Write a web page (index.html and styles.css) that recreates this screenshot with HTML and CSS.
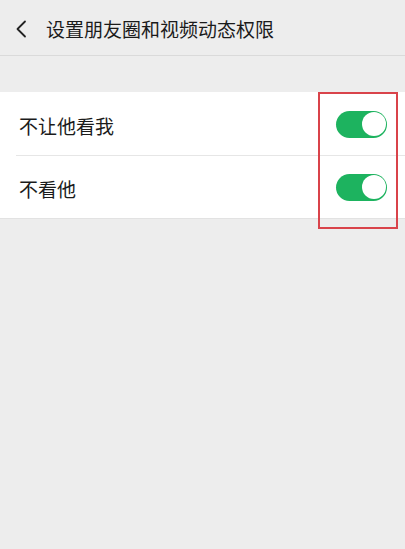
FILE: index.html
```html
<!DOCTYPE html>
<html lang="zh-CN">
<head>
<meta charset="utf-8">
<title>设置朋友圈和视频动态权限</title>
<link rel="stylesheet" href="styles.css">
</head>
<body>
<div class="page">
  <header class="nav">
    <svg class="back" width="12" height="18" viewBox="0 0 12 18" aria-hidden="true">
      <path d="M10 1.5 L2.5 9 L10 16.5" fill="none" stroke="#222" stroke-width="1.8" stroke-linecap="round" stroke-linejoin="round"/>
    </svg>
    <h1 class="title">设置朋友圈和视频动态权限</h1>
  </header>
  <ul class="list">
    <li class="row">
      <span class="label">不让他看我</span>
      <span class="switch on"><span class="knob"></span></span>
    </li>
    <li class="row">
      <span class="label">不看他</span>
      <span class="switch on"><span class="knob"></span></span>
    </li>
  </ul>
  <div class="highlight"></div>
</div>
</body>
</html>
```

FILE: styles.css
```css
html, body {
  margin: 0;
  padding: 0;
  background: #ededed;
}
body {
  font-family: "Noto Sans CJK SC", "Noto Sans", "Liberation Sans", sans-serif;
  color: #1b1b1b;
}
.page {
  position: relative;
  width: 405px;
  height: 549px;
  overflow: hidden;
}
.nav {
  height: 56px;
  box-sizing: border-box;
  border-bottom: 1px solid #dadada;
  display: flex;
  align-items: center;
  padding-left: 15px;
  gap: 19px;
}
.back {
  display: block;
  margin-top: 2px;
}
.title {
  margin: 0;
  font-size: 19px;
  font-weight: 400;
  line-height: 1;
  color: #1b1b1b;
  margin-top: 1px;
}
.list {
  list-style: none;
  margin: 36px 0 0 0;
  padding: 0;
  background: #fff;
  border-bottom: 1px solid #e2e2e2;
}
.row {
  height: 63px;
  display: flex;
  align-items: center;
  justify-content: space-between;
  padding: 0 18px 0 19px;
  position: relative;
}
.row + .row::before {
  content: "";
  position: absolute;
  left: 16px;
  right: 0;
  top: 0;
  height: 1px;
  background: #e6e6e6;
}
.label {
  font-size: 19px;
  line-height: 1;
  margin-top: 4px;
}
.switch {
  width: 51px;
  height: 27px;
  border-radius: 14px;
  background: #1db35f;
  box-sizing: border-box;
  padding: 1.5px;
  display: flex;
  justify-content: flex-end;
  margin-top: 1px;
}
.knob {
  width: 24px;
  height: 24px;
  border-radius: 50%;
  background: #fff;
}
.highlight {
  position: absolute;
  left: 318px;
  top: 92px;
  width: 80px;
  height: 137px;
  box-sizing: border-box;
  border: 2.5px solid #d9434a;
}
```
